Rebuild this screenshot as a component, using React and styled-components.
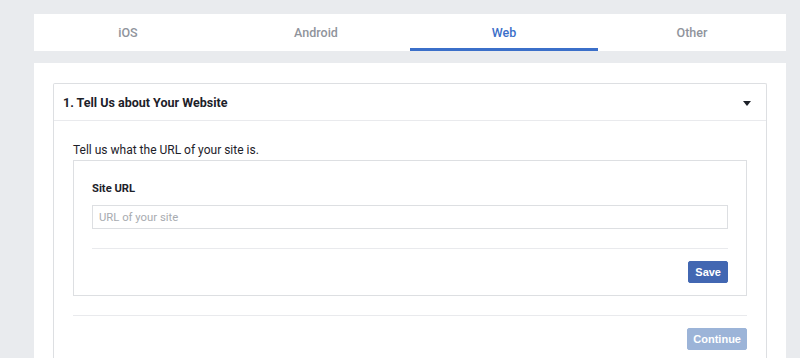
import React, { useState } from "react";
import styled, { createGlobalStyle } from "styled-components";

const Global = createGlobalStyle`
  html, body { margin: 0; padding: 0; background: #e9ebee; }
  body { font-family: Roboto, "Liberation Sans", Arial, sans-serif; color: #1d2129; }
  * { box-sizing: border-box; }
`;

const Page = styled.div`
  padding: 14px 14px 0 34px;
  display: flex;
  flex-direction: column;
  gap: 12px;
  height: 358px;
  overflow: hidden;
`;

const TabBar = styled.div`
  display: grid;
  grid-template-columns: repeat(4, 1fr);
  background: #fff;
  height: 38px;
`;

const Tab = styled.div`
  display: flex;
  align-items: center;
  justify-content: center;
  font-size: 12.5px;
  font-weight: 500;
  color: ${(p) => (p.$active ? "#3b6fc9" : "#90949c")};
  border-bottom: 3px solid ${(p) => (p.$active ? "#3b6fc9" : "transparent")};
  padding-top: 3px;
  cursor: pointer;
`;

const Card = styled.div`
  background: #fff;
  padding: 20px 19px 0 19px;
  flex: 1;
`;

const Accordion = styled.div`
  border: 1px solid #dddfe2;
  border-bottom: none;
  border-radius: 2px 2px 0 0;
`;

const AccHeader = styled.div`
  height: 37px;
  display: flex;
  align-items: center;
  justify-content: space-between;
  padding: 0 15px 0 9px;
  border-bottom: 1px solid #e9eaed;
  font-size: 12.5px;
  font-weight: 700;
  color: #1d2129;
`;

const Caret = styled.span`
  width: 0;
  height: 0;
  border-left: 4px solid transparent;
  border-right: 4px solid transparent;
  border-top: 5px solid #1d2129;
  margin-top: 2px;
`;

const AccBody = styled.div`
  padding: 21px 19px 8px 19px;
`;

const Intro = styled.p`
  margin: 0 0 2px 0;
  font-size: 12px;
  line-height: 16px;
  color: #1d2129;
`;

const Box = styled.div`
  border: 1px solid #dddfe2;
  padding: 21px 18px 12px 18px;
`;

const Label = styled.label`
  display: block;
  font-size: 11.2px;
  font-weight: 700;
  line-height: 14px;
  margin-bottom: 9px;
  color: #1d2129;
`;

const Input = styled.input`
  display: block;
  width: 100%;
  height: 24px;
  border: 1px solid #dddfe2;
  padding: 0 6px;
  font-family: Roboto, "Liberation Sans", Arial, sans-serif;
  font-size: 11.3px;
  color: #1d2129;
  outline: none;
  &::placeholder { color: #a8abb0; }
`;

const Divider = styled.div`
  height: 1px;
  background: #e9eaed;
  margin: ${(p) => p.$margin};
`;

const Actions = styled.div`
  display: flex;
  justify-content: flex-end;
`;

const Button = styled.button`
  height: 22px;
  padding: 0 ${(p) => p.$px}px;
  border: 1px solid ${(p) => (p.$disabled ? "#9cb4d8" : "#4267b2")};
  background: ${(p) => (p.$disabled ? "#9cb4d8" : "#4267b2")};
  color: #fff;
  font-family: "Liberation Sans", Arial, sans-serif;
  font-weight: 700;
  font-size: 11px;
  border-radius: 2px;
  cursor: ${(p) => (p.$disabled ? "default" : "pointer")};
`;

const tabs = ["iOS", "Android", "Web", "Other"];

export default function App() {
  const [active, setActive] = useState("Web");
  return (
    <>
      <Global />
      <Page>
        <TabBar>
          {tabs.map((t) => (
            <Tab key={t} $active={t === active} onClick={() => setActive(t)}>
              {t}
            </Tab>
          ))}
        </TabBar>
        <Card>
          <Accordion>
            <AccHeader>
              <span>1. Tell Us about Your Website</span>
              <Caret />
            </AccHeader>
            <AccBody>
              <Intro>Tell us what the URL of your site is.</Intro>
              <Box>
                <Label>Site URL</Label>
                <Input placeholder="URL of your site" />
                <Divider $margin="19px 0 12px 0" />
                <Actions>
                  <Button $px={6}>Save</Button>
                </Actions>
              </Box>
              <Divider $margin="19px 0 12px 0" />
              <Actions>
                <Button $disabled $px={5}>Continue</Button>
              </Actions>
            </AccBody>
          </Accordion>
        </Card>
      </Page>
    </>
  );
}
